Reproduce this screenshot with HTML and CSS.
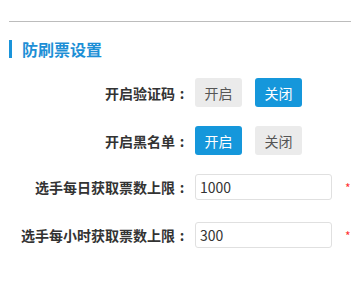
FILE: index.html
```html
<!DOCTYPE html>
<html lang="zh-CN">
<head>
    <meta charset="UTF-8">
    <meta name="viewport" content="width=device-width, initial-scale=1.0">
    <title>防刷票设置</title>
    <link rel="stylesheet" href="styles.css">
</head>
<body>
    <div class="panel">
        <h2 class="panel-title">防刷票设置</h2>
        <div class="form">
            <div class="row">
                <label class="label">开启验证码<span class="colon">:</span></label>
                <div class="switch">
                    <button class="btn">开启</button>
                    <button class="btn active">关闭</button>
                </div>
            </div>
            <div class="row">
                <label class="label">开启黑名单<span class="colon">:</span></label>
                <div class="switch">
                    <button class="btn active">开启</button>
                    <button class="btn">关闭</button>
                </div>
            </div>
            <div class="row row-input">
                <label class="label">选手每日获取票数上限<span class="colon">:</span></label>
                <input class="input" type="text" value="1000">
                <span class="required">*</span>
            </div>
            <div class="row row-input">
                <label class="label">选手每小时获取票数上限<span class="colon">:</span></label>
                <input class="input" type="text" value="300">
                <span class="required">*</span>
            </div>
        </div>
    </div>
</body>
</html>
```

FILE: styles.css
```css
* {
    box-sizing: border-box;
}
body {
    margin: 0;
    background: #fff;
    font-family: "Noto Sans CJK SC", "Noto Sans", sans-serif;
    color: #333;
}
.panel {
    margin: 21px 0 0 9px;
    border-top: 1px solid #bcbcbc;
    padding-top: 18px;
}
.panel-title {
    margin: 0 0 20px;
    padding-left: 10px;
    border-left: 3px solid #1a94da;
    font-size: 16px;
    line-height: 18px;
    font-weight: bold;
    color: #1d8fd6;
}
.row {
    display: flex;
    align-items: center;
    margin-bottom: 19px;
}
.row-input {
    margin-bottom: 22px;
}
.label {
    width: 180px;
    margin-right: 6px;
    text-align: right;
    font-size: 14px;
    font-weight: bold;
    color: #333;
    white-space: nowrap;
}
.colon {
    display: inline-block;
    width: 14px;
    text-align: center;
}
.switch {
    display: flex;
    gap: 13px;
}
.btn {
    width: 47px;
    height: 29px;
    padding: 0;
    border: none;
    border-radius: 3px;
    background: #ebebeb;
    color: #555;
    font-family: inherit;
    font-size: 14px;
}
.btn.active {
    background: #1597db;
    color: #fff;
}
.input {
    width: 137px;
    height: 26px;
    padding: 0 4px;
    border: 1px solid #e0e0e0;
    border-radius: 3px;
    font-family: inherit;
    font-size: 14px;
    color: #333;
    outline: none;
}
.required {
    margin-left: 13px;
    color: #f33;
    font-size: 12px;
}
```
